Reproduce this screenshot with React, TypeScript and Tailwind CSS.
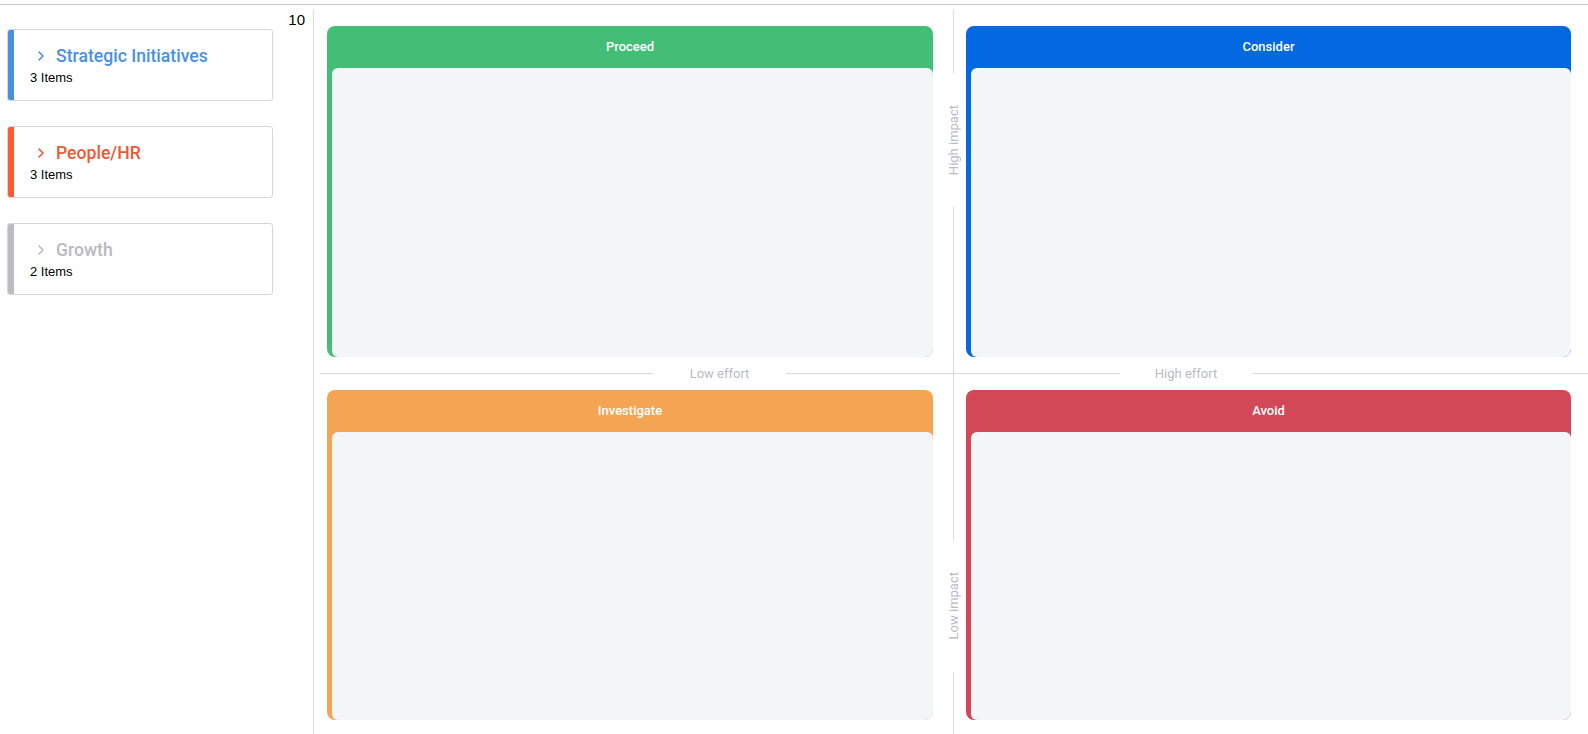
import { ReactNode } from 'react';

const roboto = { fontFamily: 'Roboto, "Liberation Sans", sans-serif' };
const arial = { fontFamily: '"Liberation Sans", Arial, sans-serif' };

type Group = { name: string; count: string; bar: string; text: string };

const groups: Group[] = [
    { name: 'Strategic Initiatives', count: '3 Items', bar: 'bg-[#4a90e2]', text: 'text-[#4a90e2]' },
    { name: 'People/HR', count: '3 Items', bar: 'bg-[#ff5a30]', text: 'text-[#ea5a35]' },
    { name: 'Growth', count: '2 Items', bar: 'bg-[#bcbcc0]', text: 'text-[#b9b9be]' },
];

function Chevron() {
    return (
        <svg width="6" height="10" viewBox="0 0 6 10" fill="none" className="shrink-0">
            <path d="M1 1l4 4-4 4" stroke="currentColor" strokeWidth="1.6" strokeLinecap="round" strokeLinejoin="round" />
        </svg>
    );
}

function GroupCard({ g }: { g: Group }) {
    return (
        <div className="flex h-[72px] border border-[#d4d6df] rounded-[3px] overflow-hidden bg-white">
            <div className={`w-[6px] shrink-0 ${g.bar}`} />
            <div className="pl-[16px] pt-[16px]">
                <div className={`flex items-center ${g.text}`}>
                    <span className="ml-[8px] mr-[12px] flex"><Chevron /></span>
                    <span className="text-[17.6px] leading-[20px] font-medium" style={roboto}>{g.name}</span>
                </div>
                <div className="mt-[4px] text-[13px] leading-[16px] text-black" style={arial}>{g.count}</div>
            </div>
        </div>
    );
}

function Panel({ title, color }: { title: string; color: string }) {
    return (
        <div className={`h-full flex flex-col rounded-[8px] overflow-hidden ${color}`}>
            <div className="h-[42px] shrink-0 flex items-center justify-center text-white text-[13px] font-medium" style={roboto}>
                {title}
            </div>
            <div className="flex-1 flex pl-[5px]">
                <div className="flex-1 rounded-[6px] bg-[#f4f5f9]" />
            </div>
        </div>
    );
}

function VLabel({ children, h }: { children: ReactNode; h: string }) {
    return (
        <div className={`${h} shrink-0 flex items-center justify-center`}>
            <span
                className="[writing-mode:vertical-rl] rotate-180 whitespace-nowrap text-[13px] leading-[15px] text-[#b8bac4]"
                style={roboto}
            >
                {children}
            </span>
        </div>
    );
}

function HLabel({ children, w }: { children: ReactNode; w: string }) {
    return (
        <div className={`${w} shrink-0 h-px flex items-center justify-center`}>
            <span className="whitespace-nowrap text-[13px] leading-[15px] text-[#b8bac4]" style={roboto}>
                {children}
            </span>
        </div>
    );
}

export default function App() {
    return (
        <div className="bg-white w-[1588px] h-[734px] overflow-hidden pt-[4px]">
            <div className="border-t border-[#c7c7ca] flex h-[730px]">
                <aside className="w-[313px] shrink-0 flex">
                    <div className="w-[273px] pl-[7px] pt-[24px] flex flex-col gap-[25px]">
                        {groups.map((g) => (
                            <GroupCard key={g.name} g={g} />
                        ))}
                    </div>
                    <div className="flex-1 text-right pr-[8px] pt-[6px] text-[15px] leading-[18px] text-black" style={arial}>
                        10
                    </div>
                </aside>
                <div className="w-px mt-[5px] bg-[#d8d9e2]" />

                <main className="flex-1 flex flex-col pt-[5px]">
                    <div className="flex h-[363px]">
                        <div className="w-[639px] shrink-0 pl-[13px] pr-[20px] pt-[16px] pb-[16px]">
                            <Panel title="Proceed" color="bg-[#42be76]" />
                        </div>
                        <div className="w-px flex flex-col items-center">
                            <div className="w-px h-[63px] bg-[#d8d9e2]" />
                            <VLabel h="h-[134px]">High impact</VLabel>
                            <div className="w-px flex-1 bg-[#d8d9e2]" />
                        </div>
                        <div className="flex-1 pl-[12px] pr-[17px] pt-[16px] pb-[16px]">
                            <Panel title="Consider" color="bg-[#0368e2]" />
                        </div>
                    </div>

                    <div className="flex h-px">
                        <div className="w-[639px] shrink-0 flex items-center pl-[6px]">
                            <div className="flex-1 h-px bg-[#d8d9e2]" />
                            <HLabel w="w-[133px]">Low effort</HLabel>
                            <div className="w-[167px] h-px bg-[#d8d9e2]" />
                        </div>
                        <div className="w-px h-px bg-[#d8d9e2]" />
                        <div className="flex-1 flex items-center">
                            <div className="w-[166px] h-px bg-[#d8d9e2]" />
                            <HLabel w="w-[132px]">High effort</HLabel>
                            <div className="flex-1 h-px bg-[#d8d9e2]" />
                        </div>
                    </div>

                    <div className="flex h-[360px]">
                        <div className="w-[639px] shrink-0 pl-[13px] pr-[20px] pt-[16px] pb-[14px]">
                            <Panel title="Investigate" color="bg-[#f4a553]" />
                        </div>
                        <div className="w-px flex flex-col items-center">
                            <div className="w-px h-[166px] bg-[#d8d9e2]" />
                            <VLabel h="h-[132px]">Low impact</VLabel>
                            <div className="w-px flex-1 bg-[#d8d9e2]" />
                        </div>
                        <div className="flex-1 pl-[12px] pr-[17px] pt-[16px] pb-[14px]">
                            <Panel title="Avoid" color="bg-[#d34857]" />
                        </div>
                    </div>
                </main>
            </div>
        </div>
    );
}
